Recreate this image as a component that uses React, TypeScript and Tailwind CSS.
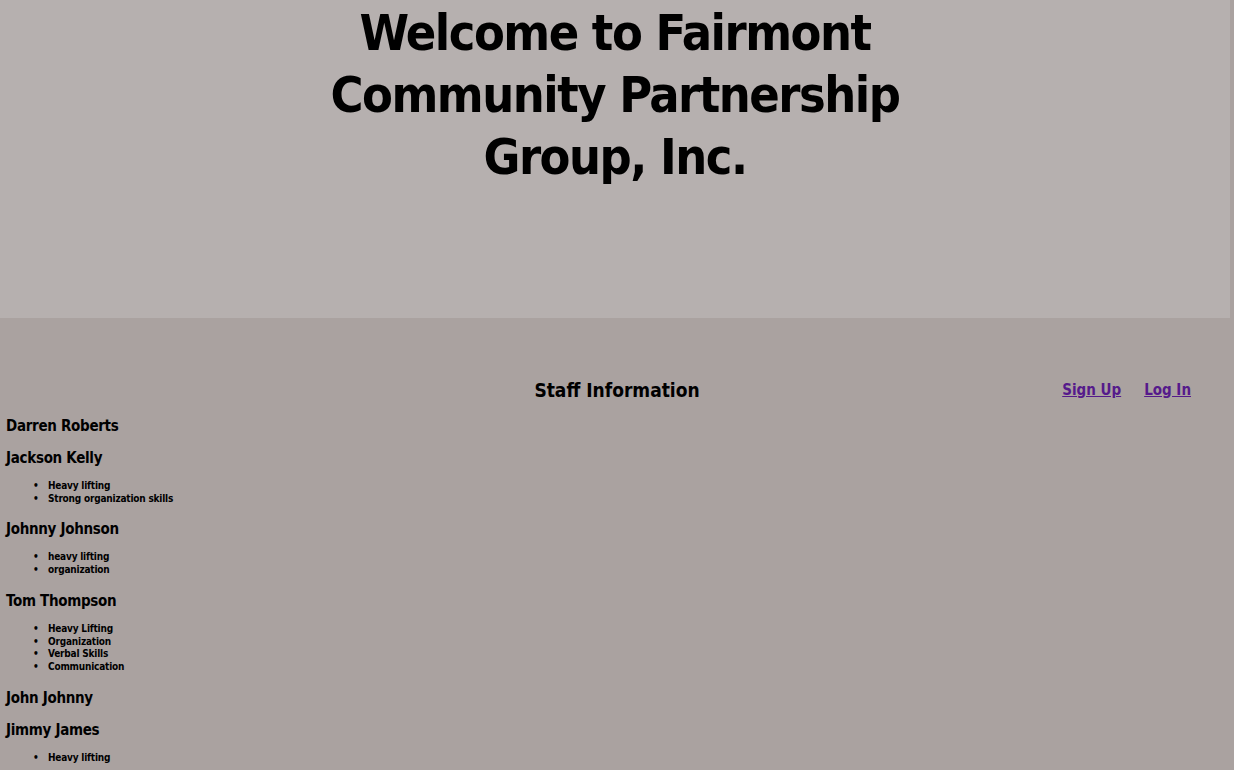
const staff: { name: string; skills: string[] }[] = [
  { name: "Darren Roberts", skills: [] },
  { name: "Jackson Kelly", skills: ["Heavy lifting", "Strong organization skills"] },
  { name: "Johnny Johnson", skills: ["heavy lifting", "organization"] },
  { name: "Tom Thompson", skills: ["Heavy Lifting", "Organization", "Verbal Skills", "Communication"] },
  { name: "John Johnny", skills: [] },
  { name: "Jimmy James", skills: ["Heavy lifting"] },
];

export default function App() {
  return (
    <div className="min-h-screen bg-[#aaa2a0] text-black font-['DejaVu_Sans_Condensed','Liberation_Sans',sans-serif]">
      <header className="mr-[4px] h-[318px] bg-[#b6b0af] pt-[2px] text-center">
        <h1 className="text-[50px] font-bold leading-[62px] tracking-[-1.5px]">
          Welcome to Fairmont
          <br />
          Community Partnership
          <br />
          Group, Inc.
        </h1>
      </header>

      <div className="grid grid-cols-[1fr_auto_1fr] items-center pt-[59px]">
        <div />
        <h2 className="text-[19px] font-bold leading-[26px]">Staff Information</h2>
        <div className="flex justify-end gap-[23px] pr-[43px] text-[15px] font-bold">
          <a href="#" className="text-[#551a8b] underline">Sign Up</a>
          <a href="#" className="text-[#551a8b] underline">Log In</a>
        </div>
      </div>

      <div className="pl-[6px] pt-[13px]">
        {staff.map((s) => (
          <div key={s.name}>
            <h3 className="mb-[12px] text-[15px] font-bold leading-[20px] tracking-[-0.3px]">{s.name}</h3>
            {s.skills.length > 0 && (
              <ul className="mb-[14px] pl-[27px] text-[10px] font-bold leading-[12.7px] tracking-[-0.2px]">
                {s.skills.map((k) => (
                  <li key={k} className="flex">
                    <span className="w-[15px] shrink-0">•</span>
                    <span>{k}</span>
                  </li>
                ))}
              </ul>
            )}
          </div>
        ))}
      </div>
    </div>
  );
}
